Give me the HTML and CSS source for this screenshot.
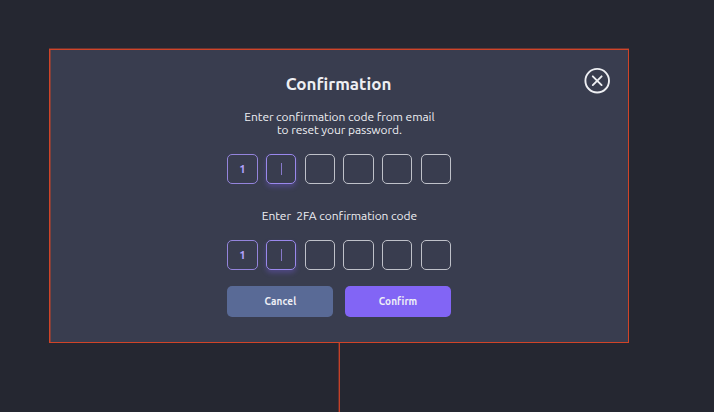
FILE: index.html
```html
<!DOCTYPE html>
<html lang="en">
<head>
<meta charset="utf-8">
<title>Confirmation</title>
<link rel="stylesheet" href="styles.css">
</head>
<body>
<main class="modal">
  <button class="close" aria-label="Close">
    <svg width="28" height="28" viewBox="0 0 28 28" fill="none" stroke="currentColor" stroke-width="1.9" stroke-linecap="round"><circle cx="14.2" cy="13.7" r="11.8"/><path d="M9.8 9.3l8.8 8.8M18.6 9.3l-8.8 8.8"/></svg>
  </button>
  <h1 class="title">Confirmation</h1>
  <p class="text">Enter confirmation code from email<br>to reset your password.</p>
  <div class="code">
    <div class="cell filled">1</div><div class="cell focused"><i class="caret"></i></div><div class="cell"></div><div class="cell"></div><div class="cell"></div><div class="cell"></div>
  </div>
  <p class="text second">Enter&nbsp; 2FA confirmation code</p>
  <div class="code">
    <div class="cell filled">1</div><div class="cell focused"><i class="caret"></i></div><div class="cell"></div><div class="cell"></div><div class="cell"></div><div class="cell"></div>
  </div>
  <div class="actions">
    <button class="button cancel">Cancel</button>
    <button class="button confirm">Confirm</button>
  </div>
</main>
<div class="connector"></div>
</body>
</html>
```
FILE: styles.css
```css
* { box-sizing: border-box; }
body {
  margin: 0;
  height: 412px;
  padding: 49px 0 0 49px;
  overflow: hidden;
  background: #252731;
  font-family: Ubuntu, "Noto Sans", sans-serif;
  color: #eeeff3;
}
.modal {
  position: relative;
  width: 580px;
  height: 294px;
  padding-top: 23px;
  border: 1px solid #d04428;
  box-shadow: 0 -1px 0 #6c3430, inset 1px 0 0 #80403b;
  background: #393d4f;
  display: flex;
  flex-direction: column;
  align-items: center;
}
.close {
  position: absolute;
  top: 17px;
  right: 17px;
  width: 28px;
  height: 28px;
  padding: 0;
  border: 0;
  background: none;
  color: #eeeff3;
}
.close svg { display: block; }
.title {
  margin: 0 1px 0 0;
  height: 22px;
  font-size: 17px;
  line-height: 22px;
  font-weight: 700;
  white-space: nowrap;
}
.text {
  margin: 15px 0 0 0.8px;
  height: 27px;
  font-size: 12px;
  line-height: 13.4px;
  letter-spacing: -0.06px;
  text-align: center;
  white-space: nowrap;
}
.code {
  width: 223.8px;
  margin: 17px 0 0 0.4px;
  display: flex;
  justify-content: space-between;
}
.cell {
  width: 30.3px;
  height: 30px;
  border: 1px solid #bfc1c9;
  border-radius: 5px;
  display: flex;
  align-items: center;
  justify-content: center;
  font-size: 11.5px;
  font-weight: 700;
}
.filled { padding-bottom: 2px; border-color: #9484dc; color: #b3a0fb; }
.focused { border-color: #9a88ed; box-shadow: 0 3px 5px rgba(128, 100, 245, .3); }
.caret { width: 1px; height: 12px; background: #8779ca; }
.second { margin-top: 25px; height: 14px; }
.second + .code { margin-top: 17px; }
.actions {
  width: 223.6px;
  margin: 16px 0 0 0.4px;
  display: flex;
  justify-content: space-between;
}
.button {
  width: 106px;
  height: 31px;
  padding: 0;
  border: 0;
  border-radius: 5px;
  font: 700 10px/31px Ubuntu, "Noto Sans", sans-serif;
  letter-spacing: 0.1px;
  color: #eeeff5;
}
.cancel { background: #596a96; }
.confirm { background: #8265f5; }
.connector { width: 1px; height: 70px; margin-left: 290px; background: #c44127; box-shadow: -1px 0 #61302f; }
```
